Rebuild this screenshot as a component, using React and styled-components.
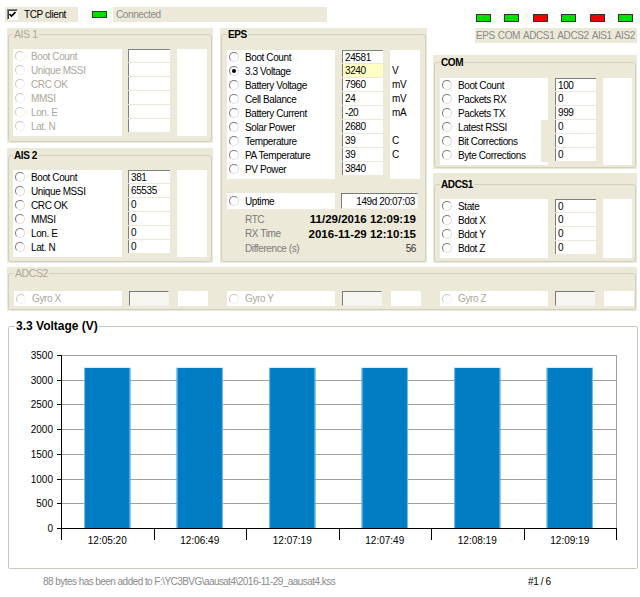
import React from "react";
import styled, { createGlobalStyle } from "styled-components";

const BEIGE = "#ece9d8";
const DISABLED = "#aca899";
const UI_FONT = `"Liberation Sans", Arial, sans-serif`;

const GlobalStyle = createGlobalStyle`
  html, body {
    margin: 0;
    padding: 0;
    background: #fff;
  }
  body {
    font-family: ${UI_FONT};
    font-size: 10px;
    letter-spacing: -0.4px;
    color: #000;
  }
`;

const Page = styled.div`
  width: 640px;
  height: 597px;
  overflow: hidden;
  background: #fff;
`;

const Upper = styled.div`
  display: flex;
  align-items: flex-start;
  padding-left: 7px;
`;

const LeftBlock = styled.div`
  width: 420px;
  display: flex;
  flex-direction: column;
`;

const RightBlock = styled.div`
  width: 204px;
  margin-left: 6px;
  display: flex;
  flex-direction: column;
`;

const TopBar = styled.div`
  height: 28px;
  box-sizing: border-box;
  padding-top: 7px;
  margin-left: -2px;
  display: flex;
  align-items: flex-start;
`;

const Field = styled.div`
  width: ${(p) => p.$w}px;
  height: 15px;
  padding-left: ${(p) => p.$pl || 0}px;
  box-sizing: border-box;
  background: ${BEIGE};
  display: flex;
  align-items: center;
  color: ${(p) => (p.$muted ? "#8a8a8a" : "#000")};
`;

const CheckBox = styled.span`
  width: 11px;
  height: 11px;
  box-sizing: border-box;
  margin: 0 6px 0 2px;
  background: #fff;
  border: 1px solid;
  border-color: #808080 #fff #fff #808080;
  box-shadow: inset 1px 1px 0 #404040;
  display: flex;
  align-items: center;
  justify-content: center;
`;

const Led = styled.span`
  display: block;
  width: 15px;
  height: 8px;
  box-sizing: border-box;
  border: 1px solid #333;
  background: ${(p) => (p.$on ? "#00e000" : "#f00000")};
`;

const ConnLed = styled(Led)`
  height: 7px;
  margin: 4px 6px 0 14px;
`;

const Status = styled.div`
  margin-left: 42px;
  display: flex;
  flex-direction: column;
`;

const LedRow = styled.div`
  margin-top: 14px;
  padding-left: 1px;
  display: grid;
  grid-template-columns: repeat(6, 28.4px);
`;

const LedLabels = styled.div`
  margin-top: 6px;
  height: 15px;
  padding-left: 1px;
  background: ${BEIGE};
  display: flex;
  align-items: center;
  gap: 3px;
  color: #8a8a8a;
`;

const GroupRow = styled.div`
  display: flex;
  gap: 7px;
`;

const Column = styled.div`
  display: flex;
  flex-direction: column;
`;

const Panel = styled.div`
  flex: none;
  width: ${(p) => p.$w}px;
  height: ${(p) => p.$h}px;
  margin-top: ${(p) => p.$mt || 0}px;
  padding: ${(p) => p.$pt || 0}px 1px 1px;
  box-sizing: border-box;
  background: ${BEIGE};
  display: flex;
  flex-direction: column;
`;

const Frame = styled.fieldset`
  flex: 1;
  min-width: 0;
  margin: 0;
  padding: ${(p) => p.$padTop ?? 8}px 3px 0 ${(p) => p.$padLeft ?? 5}px;
  border: 1px solid #d0d0bf;
  border-radius: 3px;
`;

const Title = styled.legend`
  padding: 0 1px;
  line-height: 13px;
  font-size: ${(p) => (p.$disabled ? "10.5px" : "10px")};
  font-weight: ${(p) => (p.$disabled ? 400 : 700)};
  color: ${(p) => (p.$disabled ? DISABLED : "#000")};
`;

const ReadoutRow = styled.div`
  display: flex;
  align-items: stretch;
`;

const List = styled.div`
  width: ${(p) => p.$w}px;
  padding-bottom: 3px;
  background: #fff;
`;

const Item = styled.div`
  height: 14px;
  box-sizing: border-box;
  display: flex;
  align-items: center;
  border-right: ${(p) => (p.$notch ? `7px solid ${BEIGE}` : "none")};
  color: ${(p) => (p.$disabled ? DISABLED : "#000")};
  white-space: nowrap;
`;

const Radio = styled.span`
  position: relative;
  flex: none;
  width: 10px;
  height: 10px;
  box-sizing: border-box;
  margin: 0 6px 0 2px;
  border-radius: 50%;
  background: #fff;
  border: 1px solid;
  border-color: ${(p) =>
    p.$disabled ? "#cbc8bd #f2f1ec #f2f1ec #cbc8bd" : "#7c7c7c #dcdcdc #dcdcdc #7c7c7c"};

  &::after {
    content: "";
    display: ${(p) => (p.$checked ? "block" : "none")};
    position: absolute;
    left: 2px;
    top: 2px;
    width: 4px;
    height: 4px;
    border-radius: 50%;
    background: #000;
  }
`;

const Values = styled.div`
  align-self: flex-start;
  width: ${(p) => p.$w}px;
  margin-left: ${(p) => p.$gap}px;
  display: flex;
  flex-direction: column;
`;

const Cell = styled.div`
  height: 13px;
  margin-bottom: 1px;
  box-sizing: border-box;
  padding-left: 2px;
  line-height: 14px;
  background: ${(p) => (p.$hl ? "#ffffc4" : "#fff")};
  border-left: 1px solid #808080;
  white-space: nowrap;
  overflow: hidden;

  &:first-child {
    border-top: 1px solid #808080;
    line-height: 13px;
  }
`;

const Units = styled.div`
  width: ${(p) => p.$w}px;
  margin-left: ${(p) => p.$gap}px;
  background: #fff;
`;

const UnitText = styled.div`
  height: 14px;
  line-height: 14px;
  padding-left: 2px;
`;

const Inset = styled.div`
  width: ${(p) => p.$w}px;
  height: ${(p) => p.$h || 15}px;
  margin-left: ${(p) => p.$gap || 0}px;
  box-sizing: border-box;
  padding-right: 2px;
  border: 1px solid;
  border-color: #7a7a7a #f4f4f4 #f4f4f4 #7a7a7a;
  background: ${(p) => (p.$disabled ? "#f6f5f0" : "#fff")};
  display: flex;
  align-items: center;
  justify-content: flex-end;
`;

const WhiteBox = styled.div`
  width: ${(p) => p.$w}px;
  margin-left: ${(p) => p.$gap || 0}px;
  background: #fff;
  display: flex;
  align-items: center;
  color: ${(p) => (p.$disabled ? DISABLED : "#000")};
`;

const UptimeRow = styled.div`
  display: flex;
  margin-top: 14px;
  height: 16px;
`;

const InfoRows = styled.div`
  margin-top: 3px;
  padding: 0 6px 0 18px;
  display: flex;
  flex-direction: column;
`;

const InfoRow = styled.div`
  height: 14.5px;
  display: flex;
  align-items: center;
  justify-content: space-between;
  color: #7a7a7a;
`;

const InfoValue = styled.span`
  font-size: ${(p) => (p.$bold ? "11.5px" : "10px")};
  font-weight: ${(p) => (p.$bold ? 700 : 400)};
  letter-spacing: ${(p) => (p.$bold ? "0" : "-0.4px")};
  color: ${(p) => (p.$bold ? "#000" : "#333")};
`;

const GyroRow = styled.div`
  display: flex;
  gap: 19px;
  height: 15px;
`;

const Gyro = styled.div`
  display: flex;
`;

const ChartFrame = styled.fieldset`
  width: 630px;
  height: 250px;
  box-sizing: border-box;
  margin: 8px 0 0 8px;
  padding: 0 0 0 6px;
  border: 1px solid #c8c8bb;
  border-radius: 2px;
  background: #fff;
`;

const ChartTitle = styled.legend`
  padding: 0 1px;
  line-height: 14px;
  font-size: 12px;
  font-weight: 700;
  letter-spacing: 0;
`;

const Footer = styled.div`
  height: 24px;
  padding-left: 43px;
  display: grid;
  grid-template-columns: 485px auto;
  align-items: center;
`;

const FooterNote = styled.span`
  color: #8a8a8a;
  letter-spacing: -0.55px;
`;

const ais = ["Boot Count", "Unique MSSI", "CRC OK", "MMSI", "Lon. E", "Lat. N"];
const ais2Values = ["381", "65535", "0", "0", "0", "0"];

const eps = [
  { label: "Boot Count", value: "24581" },
  { label: "3.3 Voltage", value: "3240", unit: "V", checked: true, hl: true },
  { label: "Battery Voltage", value: "7960", unit: "mV" },
  { label: "Cell Balance", value: "24", unit: "mV" },
  { label: "Battery Current", value: "-20", unit: "mA" },
  { label: "Solar Power", value: "2680" },
  { label: "Temperature", value: "39", unit: "C" },
  { label: "PA Temperature", value: "39", unit: "C" },
  { label: "PV Power", value: "3840" },
];

const com = [
  { label: "Boot Count", value: "100" },
  { label: "Packets RX", value: "0" },
  { label: "Packets TX", value: "999" },
  { label: "Latest RSSI", value: "0", notch: true },
  { label: "Bit Corrections", value: "0", notch: true },
  { label: "Byte Corrections", value: "0", notch: true },
];

const adcs1 = ["State", "Bdot X", "Bdot Y", "Bdot Z"].map((label) => ({ label, value: "0" }));

const leds = [
  ["EPS", true],
  ["COM", true],
  ["ADCS1", false],
  ["ADCS2", true],
  ["AIS1", false],
  ["AIS2", true],
];

const times = ["12:05:20", "12:06:49", "12:07:19", "12:07:49", "12:08:19", "12:09:19"];

function Readout({ rows, disabled, listW = 108, valGap = 7, valW = 41, unitW = 30 }) {
  return (
    <ReadoutRow>
      <List $w={listW}>
        {rows.map((r) => (
          <Item key={r.label} $notch={r.notch} $disabled={disabled}>
            <Radio $checked={r.checked} $disabled={disabled} />
            {r.label}
          </Item>
        ))}
      </List>
      <Values $w={valW} $gap={valGap}>
        {rows.map((r) => (
          <Cell key={r.label} $hl={r.hl}>
            {r.value}
          </Cell>
        ))}
      </Values>
      <Units $w={unitW} $gap={7}>
        {rows.map((r) => (
          <UnitText key={r.label}>{r.unit}</UnitText>
        ))}
      </Units>
    </ReadoutRow>
  );
}

function VoltageChart() {
  const left = 46;
  const right = 601;
  const top = 22;
  const bottom = 195;
  const max = 3500;
  const yOf = (v) => Math.round(bottom - (v / max) * (bottom - top)) + 0.5;
  const step = (right - left) / times.length;
  const ticks = [0, 500, 1000, 1500, 2000, 2500, 3000, 3500];

  return (
    <svg width="616" height="230" style={{ display: "block" }} fontFamily={UI_FONT} fontSize="10" letterSpacing="0">
      {ticks.map((t) => (
        <g key={t}>
          {t > 0 && <line x1={left} x2={right} y1={yOf(t)} y2={yOf(t)} stroke="#a0a0a0" />}
          <line x1={left - 4} x2={left} y1={yOf(t)} y2={yOf(t)} stroke="#000" />
          <text x={38} y={yOf(t) + 3.5} textAnchor="end">
            {t}
          </text>
        </g>
      ))}
      <line x1={right + 0.5} x2={right + 0.5} y1={top} y2={bottom} stroke="#a0a0a0" />
      {times.map((label, i) => {
        const x = left + i * step + step / 4;
        const w = step / 2;
        const y = bottom - (3240 / max) * (bottom - top);
        return (
          <g key={label}>
            <rect x={x} y={y} width={w} height={bottom - y} fill="#007dc3" />
            <line x1={x + 0.5} x2={x + 0.5} y1={y} y2={bottom} stroke="#7cc0ea" />
            <line x1={x + w - 0.5} x2={x + w - 0.5} y1={y} y2={bottom} stroke="#7cc0ea" />
            <text x={left + i * step + step / 2} y={211} textAnchor="middle">
              {label}
            </text>
          </g>
        );
      })}
      <line x1={left + 0.5} x2={left + 0.5} y1={top} y2={bottom} stroke="#000" />
      <line x1={left} x2={right + 1} y1={bottom + 0.5} y2={bottom + 0.5} stroke="#000" />
      {times.concat([""]).map((_, i) => {
        const x = Math.round(left + i * step) + 0.5;
        return <line key={i} x1={x} x2={x} y1={bottom} y2={bottom + 12} stroke="#000" />;
      })}
    </svg>
  );
}

export default function App() {
  return (
    <>
      <GlobalStyle />
      <Page>
        <Upper>
          <LeftBlock>
            <TopBar>
              <Field $w={73}>
                <CheckBox>
                  <svg width="7" height="7" viewBox="0 0 7 7">
                    <path d="M0.5 3 L2.5 5 L6.5 1" fill="none" stroke="#000" strokeWidth="1.6" />
                  </svg>
                </CheckBox>
                TCP client
              </Field>
              <ConnLed $on />
              <Field $w={214} $pl={3} $muted>
                Connected
              </Field>
            </TopBar>
            <GroupRow>
              <Column>
                <Panel $w={206} $h={115}>
                  <Frame $padLeft={4}>
                    <Title $disabled>AIS 1</Title>
                    <Readout
                      disabled
                      listW={109}
                      valGap={6}
                      valW={42}
                      rows={ais.map((label) => ({ label, value: "" }))}
                    />
                  </Frame>
                </Panel>
                <Panel $w={206} $h={115} $mt={5} $pt={1}>
                  <Frame $padLeft={4}>
                    <Title>AIS 2</Title>
                    <Readout
                      listW={109}
                      valGap={6}
                      valW={42}
                      rows={ais.map((label, i) => ({ label, value: ais2Values[i] }))}
                    />
                  </Frame>
                </Panel>
              </Column>
              <Panel $w={207} $h={235}>
                <Frame $padTop={9}>
                  <Title>EPS</Title>
                  <Readout rows={eps} />
                  <UptimeRow>
                    <WhiteBox $w={108}>
                      <Radio />
                      Uptime
                    </WhiteBox>
                    <Inset $w={77} $h={16} $gap={6}>
                      149d 20:07:03
                    </Inset>
                  </UptimeRow>
                  <InfoRows>
                    <InfoRow>
                      RTC
                      <InfoValue $bold>11/29/2016 12:09:19</InfoValue>
                    </InfoRow>
                    <InfoRow>
                      RX Time
                      <InfoValue $bold>2016-11-29 12:10:15</InfoValue>
                    </InfoRow>
                    <InfoRow>
                      Difference (s)
                      <InfoValue>56</InfoValue>
                    </InfoRow>
                  </InfoRows>
                </Frame>
              </Panel>
            </GroupRow>
          </LeftBlock>
          <RightBlock>
            <Status>
              <LedRow>
                {leds.map(([name, on]) => (
                  <Led key={name} $on={on} />
                ))}
              </LedRow>
              <LedLabels>
                {leds.map(([name]) => (
                  <span key={name}>{name}</span>
                ))}
              </LedLabels>
            </Status>
            <Panel $w={204} $h={114} $mt={12} $pt={1}>
              <Frame $padTop={9}>
                <Title>COM</Title>
                <Readout rows={com} unitW={29} />
              </Frame>
            </Panel>
            <Panel $w={204} $h={90} $mt={4} $pt={5}>
              <Frame>
                <Title>ADCS1</Title>
                <Readout rows={adcs1} unitW={29} />
              </Frame>
            </Panel>
          </RightBlock>
        </Upper>
        <Upper>
          <Panel $w={630} $h={44} $mt={4}>
            <Frame $padTop={11}>
              <Title $disabled>ADCS2</Title>
              <GyroRow>
                {["Gyro X", "Gyro Y", "Gyro Z"].map((g) => (
                  <Gyro key={g}>
                    <WhiteBox $w={108} $disabled>
                      <Radio $disabled />
                      {g}
                    </WhiteBox>
                    <Inset $w={40} $gap={7} $disabled />
                    <WhiteBox $w={30} $gap={9} />
                  </Gyro>
                ))}
              </GyroRow>
            </Frame>
          </Panel>
        </Upper>
        <ChartFrame>
          <ChartTitle>3.3 Voltage (V)</ChartTitle>
          <VoltageChart />
        </ChartFrame>
        <Footer>
          <FooterNote>{"88 bytes has been added to F:\\YC3BVG\\aausat4\\2016-11-29_aausat4.kss"}</FooterNote>
          <span>#1 / 6</span>
        </Footer>
      </Page>
    </>
  );
}
